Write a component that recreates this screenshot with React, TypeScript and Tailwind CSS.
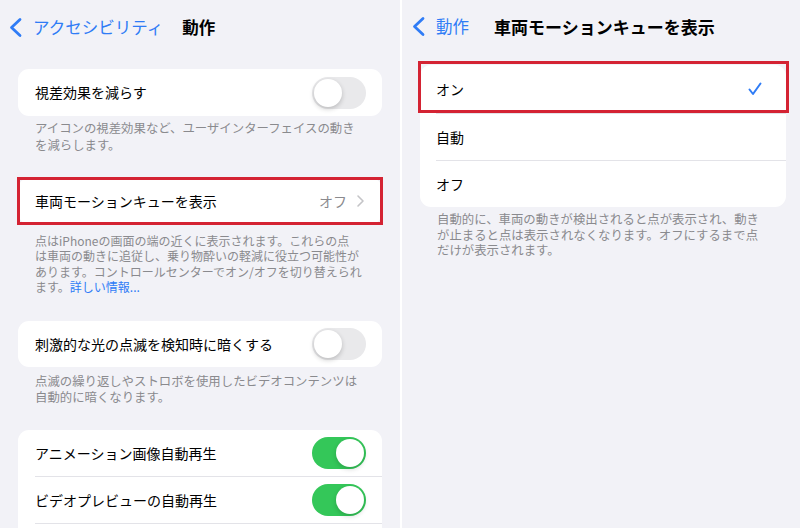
import React from "react";

function Toggle({ on }: { on: boolean }) {
  return on ? (
    <div className="w-[54px] h-[32px] rounded-full bg-[#34c759] p-[2px] flex justify-end shrink-0">
      <div className="w-[28px] h-[28px] rounded-full bg-white shadow-[0_2px_5px_rgba(0,0,0,0.18)]" />
    </div>
  ) : (
    <div className="w-[54px] h-[32px] rounded-full bg-[#e9e9eb] p-[2px] flex shrink-0">
      <div className="w-[28px] h-[28px] rounded-full bg-white shadow-[0_2px_5px_rgba(0,0,0,0.2)]" />
    </div>
  );
}

function BackChevron() {
  return (
    <svg width="15" height="21" viewBox="0 0 15 21" className="shrink-0">
      <polyline points="12,2.5 3.5,10.5 12,18.5" fill="none" stroke="#2f7cf6" strokeWidth="2.8" strokeLinecap="round" strokeLinejoin="round" />
    </svg>
  );
}

function Disclosure() {
  return (
    <svg width="9" height="14" viewBox="0 0 9 14" className="shrink-0">
      <polyline points="2,2 7,7 2,12" fill="none" stroke="#c4c4c7" strokeWidth="1.6" strokeLinecap="round" strokeLinejoin="round" />
    </svg>
  );
}

function Check() {
  return (
    <svg width="14" height="14" viewBox="0 0 14 14" className="shrink-0">
      <polyline points="1.5,7.5 5,12 12.5,1.5" fill="none" stroke="#2f7cf6" strokeWidth="2" strokeLinecap="round" strokeLinejoin="round" />
    </svg>
  );
}

export default function App() {
  return (
    <div className="w-[800px] h-[528px] overflow-hidden flex bg-white font-['Noto_Sans_CJK_JP','Noto_Sans',sans-serif] text-[#000]">
      {/* Left panel */}
      <div className="w-[400px] h-[528px] bg-[#f2f2f7] overflow-hidden shrink-0">
        <div className="h-[54px] flex items-center pl-[8px]">
          <BackChevron />
          <span className="ml-[10px] text-[16.5px] text-[#2f7cf6] leading-none">アクセシビリティ</span>
          <span className="ml-[19px] text-[16.5px] font-bold leading-none">動作</span>
        </div>

        <div className="mx-[18px] mt-[15px] h-[47px] bg-white rounded-[11px] flex items-center justify-between pl-[17px] pr-[16px]">
          <span className="text-[14px]">視差効果を減らす</span>
          <Toggle on={false} />
        </div>
        <div className="ml-[35px] mt-[4px] text-[12.4px] leading-[17px] text-[#8a8a8e] whitespace-nowrap">
          アイコンの視差効果など、ユーザインターフェイスの動き<br />を減らします。
        </div>

        <div className="relative mx-[18px] mt-[24px] h-[46px] bg-white rounded-[11px] flex items-center pl-[17px] pr-[17px]">
          <span className="text-[14px] flex-1">車両モーションキューを表示</span>
          <span className="text-[14px] text-[#8a8a8e] mr-[9px]">オフ</span>
          <Disclosure />
          <div className="absolute left-[-1px] right-[-1px] top-[-1px] bottom-[-1px] border-[3px] border-[#d42333]" />
        </div>
        <div className="ml-[35px] mt-[9px] text-[12px] leading-[15.3px] text-[#8a8a8e] whitespace-nowrap">
          点はiPhoneの画面の端の近くに表示されます。これらの点<br />
          は車両の動きに追従し、乗り物酔いの軽減に役立つ可能性が<br />
          あります。コントロールセンターでオン/オフを切り替えられ<br />
          ます。<span className="text-[#2f7cf6]">詳しい情報...</span>
        </div>

        <div className="mx-[18px] mt-[27px] h-[46px] bg-white rounded-[11px] flex items-center justify-between pl-[17px] pr-[16px]">
          <span className="text-[14px]">刺激的な光の点滅を検知時に暗くする</span>
          <Toggle on={false} />
        </div>
        <div className="ml-[35px] mt-[6px] text-[12.4px] leading-[16px] text-[#8a8a8e] whitespace-nowrap">
          点滅の繰り返しやストロボを使用したビデオコンテンツは<br />自動的に暗くなります。
        </div>

        <div className="mx-[18px] mt-[25px] bg-white rounded-[11px] pl-[17px]">
          <div className="h-[46px] flex items-center justify-between pr-[16px]">
            <span className="text-[14px]">アニメーション画像自動再生</span>
            <Toggle on={true} />
          </div>
          <div className="h-px bg-[#e3e3e8]" />
          <div className="h-[46px] flex items-center justify-between pr-[16px]">
            <span className="text-[14px]">ビデオプレビューの自動再生</span>
            <Toggle on={true} />
          </div>
          <div className="h-px bg-[#e3e3e8]" />
          <div className="h-[46px]" />
        </div>
      </div>

      {/* Divider */}
      <div className="w-[2px] h-[528px] bg-white shrink-0" />

      {/* Right panel */}
      <div className="flex-1 h-[528px] bg-[#f2f2f7] overflow-hidden">
        <div className="h-[52px] flex items-center pl-[9px]">
          <BackChevron />
          <span className="ml-[10px] text-[16.5px] text-[#2f7cf6] leading-none">動作</span>
          <span className="ml-[25px] text-[17px] font-bold leading-none">車両モーションキューを表示</span>
        </div>

        <div className="relative ml-[18px] mr-[14px] mt-[13px] bg-white rounded-[11px] pl-[16px]">
          <div className="h-[48px] flex items-center justify-between pr-[24px]">
            <span className="text-[14px]">オン</span>
            <Check />
          </div>
          <div className="h-px bg-[#e3e3e8]" />
          <div className="h-[46px] flex items-center">
            <span className="text-[14px]">自動</span>
          </div>
          <div className="h-px bg-[#e3e3e8]" />
          <div className="h-[46px] flex items-center">
            <span className="text-[14px]">オフ</span>
          </div>
          <div className="absolute left-[-2px] right-[-3px] top-[-4px] h-[52px] border-[3px] border-[#d42333]" />
        </div>
        <div className="ml-[35px] mt-[5px] text-[12.4px] leading-[15.5px] text-[#8a8a8e] whitespace-nowrap">
          自動的に、車両の動きが検出されると点が表示され、動き<br />
          が止まると点は表示されなくなります。オフにするまで点<br />
          だけが表示されます。
        </div>
      </div>
    </div>
  );
}
